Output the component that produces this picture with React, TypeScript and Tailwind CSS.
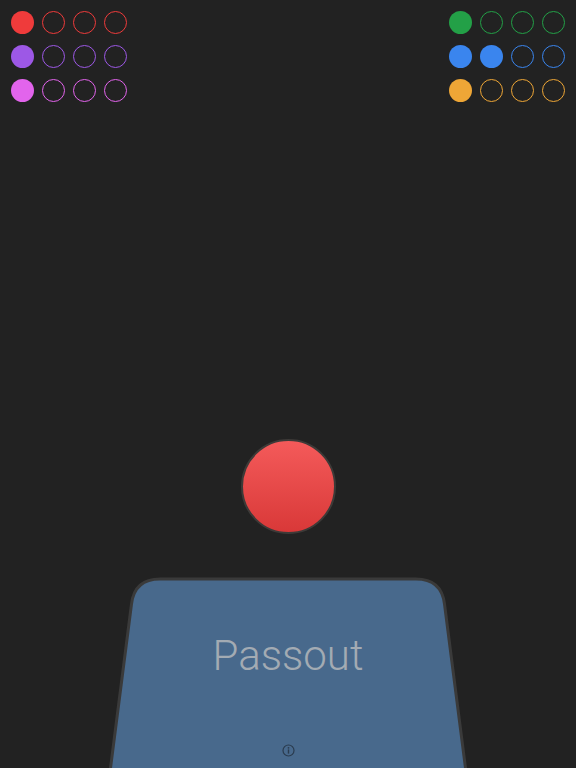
import React from "react";

const left = [
  { color: "#ef3b3b", filled: 1 },
  { color: "#9d58e6", filled: 1 },
  { color: "#e264ec", filled: 1 },
];
const right = [
  { color: "#23a047", filled: 1 },
  { color: "#3a85ee", filled: 2 },
  { color: "#eea636", filled: 1 },
];

function DotGrid({ rows }: { rows: { color: string; filled: number }[] }) {
  return (
    <div className="flex flex-col gap-[11px]">
      {rows.map((r, i) => (
        <div key={i} className="flex gap-[8px]">
          {[0, 1, 2, 3].map((j) => (
            <div
              key={j}
              className="w-[23px] h-[23px] rounded-full"
              style={j < r.filled ? { background: r.color } : { border: "1.5px solid " + r.color }}
            />
          ))}
        </div>
      ))}
    </div>
  );
}

export default function App() {
  return (
    <div className="w-[576px] h-[768px] bg-[#222222] flex flex-col overflow-hidden" style={{ fontFamily: "Roboto, 'Liberation Sans', sans-serif" }}>
      <div className="flex justify-between pl-[11px] pr-[11px] pt-[11px]">
        <DotGrid rows={left} />
        <DotGrid rows={right} />
      </div>

      <div className="flex-1" />

      <div className="flex justify-center mb-[43px]">
        <div className="w-[95px] h-[95px] rounded-full border-[2px] border-[#3d3a38] bg-gradient-to-b from-[#f45a5a] to-[#d93838]" />
      </div>

      <div className="relative h-[191px] w-full">
        <svg className="absolute inset-0" width="576" height="191" viewBox="0 0 576 191">
          <path
            d="M110,195 L131.5,27 Q134.5,2 160,2 L416,2 Q441.5,2 444.5,27 L466,195 Z"
            fill="#48698c"
            stroke="#3a3a3a"
            strokeWidth="3"
          />
        </svg>
        <div className="relative flex flex-col items-center h-full">
          <div className="mt-[53px] text-[42px] leading-[52px] font-light text-[#a3abb3]">Passout</div>
          <div className="flex-1" />
          <svg className="mb-[11px]" width="13" height="13" viewBox="0 0 13 13">
            <circle cx="6.5" cy="6.5" r="5.5" fill="none" stroke="#2a3b4e" strokeWidth="1.2" />
            <circle cx="6.5" cy="3.8" r="0.9" fill="#2a3b4e" />
            <rect x="5.8" y="5.4" width="1.4" height="4.2" fill="#2a3b4e" />
          </svg>
        </div>
      </div>
    </div>
  );
}
